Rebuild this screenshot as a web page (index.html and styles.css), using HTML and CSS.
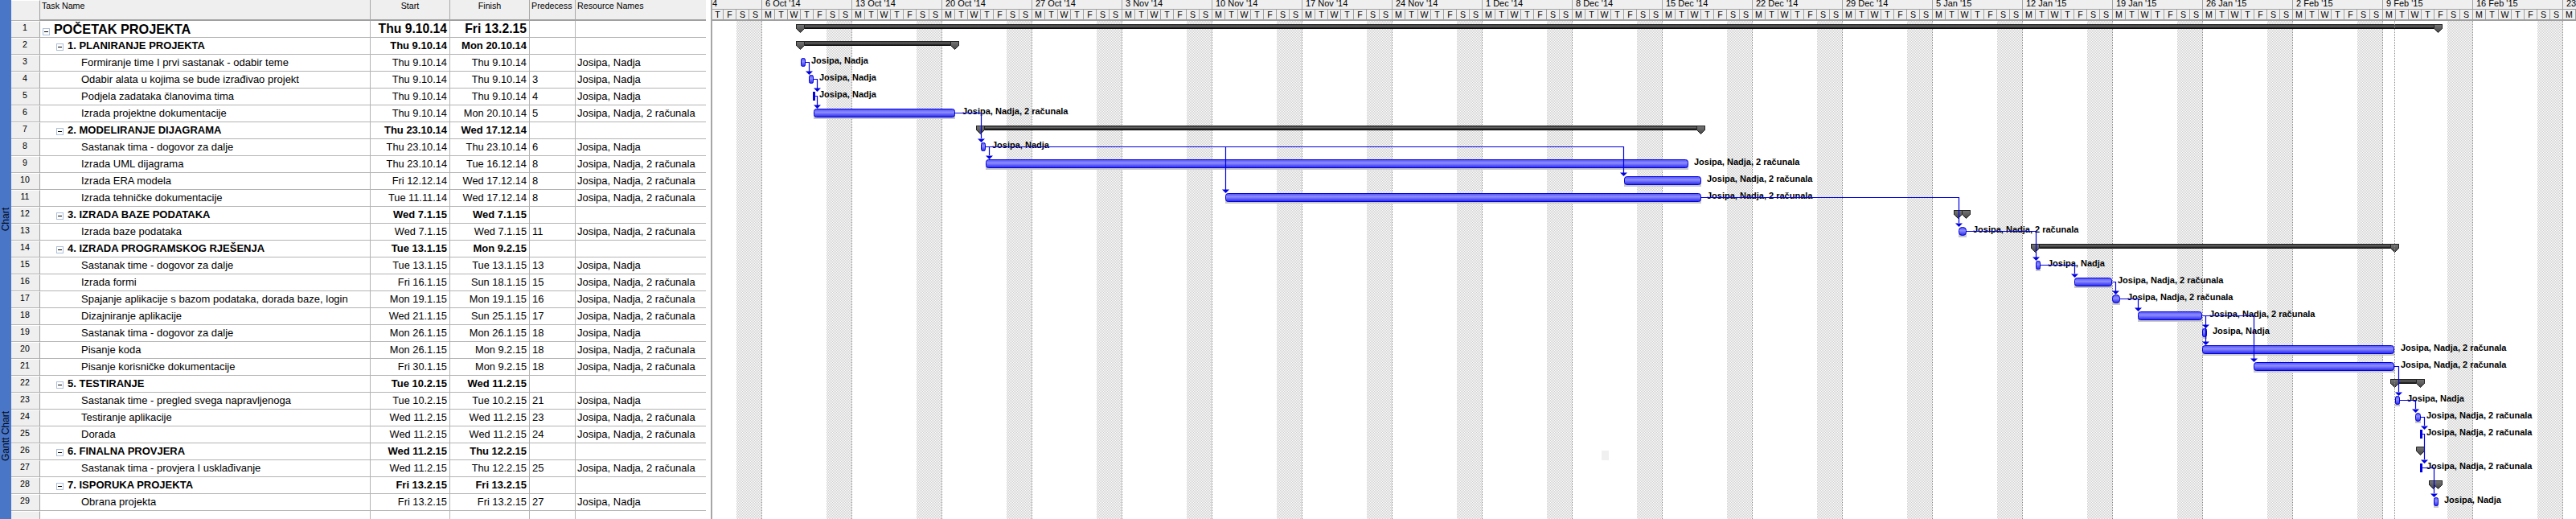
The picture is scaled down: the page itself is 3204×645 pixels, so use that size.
FILE: index.html
```html
<!DOCTYPE html>
<html lang="en">
<head>
    <meta charset="UTF-8">
    <title>Gantt Chart</title>
    <link rel="stylesheet" href="styles.css">
</head>
<body>
    <div class="view-bar">
        <span class="view-chart">Chart</span>
        <span class="view-gantt">Gantt Chart</span>
    </div>

    <div class="sheet">
        <table>
            <colgroup>
                <col class="c-num"><col class="c-name"><col class="c-date"><col class="c-date"><col class="c-pred"><col class="c-res">
            </colgroup>
            <thead>
                <tr>
                    <th class="num"></th>
                    <th class="left">Task Name</th>
                    <th>Start</th>
                    <th>Finish</th>
                    <th class="left">Predecess</th>
                    <th class="left">Resource Names</th>
                </tr>
            </thead>
            <tbody>
                <tr class="title"><td class="num">1</td><td class="name"><span class="toggle"></span>POČETAK PROJEKTA</td><td class="date">Thu 9.10.14</td><td class="date">Fri 13.2.15</td><td class="pred"></td><td class="res"></td></tr>
                <tr class="summary"><td class="num">2</td><td class="name"><span class="toggle"></span>1. PLANIRANJE PROJEKTA</td><td class="date">Thu 9.10.14</td><td class="date">Mon 20.10.14</td><td class="pred"></td><td class="res"></td></tr>
                <tr class="task"><td class="num">3</td><td class="name">Formiranje time I prvi sastanak - odabir teme</td><td class="date">Thu 9.10.14</td><td class="date">Thu 9.10.14</td><td class="pred"></td><td class="res">Josipa, Nadja</td></tr>
                <tr class="task"><td class="num">4</td><td class="name">Odabir alata u kojima se bude izrađivao projekt</td><td class="date">Thu 9.10.14</td><td class="date">Thu 9.10.14</td><td class="pred">3</td><td class="res">Josipa, Nadja</td></tr>
                <tr class="task"><td class="num">5</td><td class="name">Podjela zadataka članovima tima</td><td class="date">Thu 9.10.14</td><td class="date">Thu 9.10.14</td><td class="pred">4</td><td class="res">Josipa, Nadja</td></tr>
                <tr class="task"><td class="num">6</td><td class="name">Izrada projektne dokumentacije</td><td class="date">Thu 9.10.14</td><td class="date">Mon 20.10.14</td><td class="pred">5</td><td class="res">Josipa, Nadja, 2 računala</td></tr>
                <tr class="summary"><td class="num">7</td><td class="name"><span class="toggle"></span>2. MODELIRANJE DIJAGRAMA</td><td class="date">Thu 23.10.14</td><td class="date">Wed 17.12.14</td><td class="pred"></td><td class="res"></td></tr>
                <tr class="task"><td class="num">8</td><td class="name">Sastanak tima - dogovor za dalje</td><td class="date">Thu 23.10.14</td><td class="date">Thu 23.10.14</td><td class="pred">6</td><td class="res">Josipa, Nadja</td></tr>
                <tr class="task"><td class="num">9</td><td class="name">Izrada UML dijagrama</td><td class="date">Thu 23.10.14</td><td class="date">Tue 16.12.14</td><td class="pred">8</td><td class="res">Josipa, Nadja, 2 računala</td></tr>
                <tr class="task"><td class="num">10</td><td class="name">Izrada ERA modela</td><td class="date">Fri 12.12.14</td><td class="date">Wed 17.12.14</td><td class="pred">8</td><td class="res">Josipa, Nadja, 2 računala</td></tr>
                <tr class="task"><td class="num">11</td><td class="name">Izrada tehničke dokumentacije</td><td class="date">Tue 11.11.14</td><td class="date">Wed 17.12.14</td><td class="pred">8</td><td class="res">Josipa, Nadja, 2 računala</td></tr>
                <tr class="summary"><td class="num">12</td><td class="name"><span class="toggle"></span>3. IZRADA BAZE PODATAKA</td><td class="date">Wed 7.1.15</td><td class="date">Wed 7.1.15</td><td class="pred"></td><td class="res"></td></tr>
                <tr class="task"><td class="num">13</td><td class="name">Izrada baze podataka</td><td class="date">Wed 7.1.15</td><td class="date">Wed 7.1.15</td><td class="pred">11</td><td class="res">Josipa, Nadja, 2 računala</td></tr>
                <tr class="summary"><td class="num">14</td><td class="name"><span class="toggle"></span>4. IZRADA PROGRAMSKOG RJEŠENJA</td><td class="date">Tue 13.1.15</td><td class="date">Mon 9.2.15</td><td class="pred"></td><td class="res"></td></tr>
                <tr class="task"><td class="num">15</td><td class="name">Sastanak time - dogovor za dalje</td><td class="date">Tue 13.1.15</td><td class="date">Tue 13.1.15</td><td class="pred">13</td><td class="res">Josipa, Nadja</td></tr>
                <tr class="task"><td class="num">16</td><td class="name">Izrada formi</td><td class="date">Fri 16.1.15</td><td class="date">Sun 18.1.15</td><td class="pred">15</td><td class="res">Josipa, Nadja, 2 računala</td></tr>
                <tr class="task"><td class="num">17</td><td class="name">Spajanje aplikacije s bazom podataka, dorada baze, login</td><td class="date">Mon 19.1.15</td><td class="date">Mon 19.1.15</td><td class="pred">16</td><td class="res">Josipa, Nadja, 2 računala</td></tr>
                <tr class="task"><td class="num">18</td><td class="name">Dizajniranje aplikacije</td><td class="date">Wed 21.1.15</td><td class="date">Sun 25.1.15</td><td class="pred">17</td><td class="res">Josipa, Nadja, 2 računala</td></tr>
                <tr class="task"><td class="num">19</td><td class="name">Sastanak tima - dogovor za dalje</td><td class="date">Mon 26.1.15</td><td class="date">Mon 26.1.15</td><td class="pred">18</td><td class="res">Josipa, Nadja</td></tr>
                <tr class="task"><td class="num">20</td><td class="name">Pisanje koda</td><td class="date">Mon 26.1.15</td><td class="date">Mon 9.2.15</td><td class="pred">18</td><td class="res">Josipa, Nadja, 2 računala</td></tr>
                <tr class="task"><td class="num">21</td><td class="name">Pisanje korisničke dokumentacije</td><td class="date">Fri 30.1.15</td><td class="date">Mon 9.2.15</td><td class="pred">18</td><td class="res">Josipa, Nadja, 2 računala</td></tr>
                <tr class="summary"><td class="num">22</td><td class="name"><span class="toggle"></span>5. TESTIRANJE</td><td class="date">Tue 10.2.15</td><td class="date">Wed 11.2.15</td><td class="pred"></td><td class="res"></td></tr>
                <tr class="task"><td class="num">23</td><td class="name">Sastanak time - pregled svega napravljenoga</td><td class="date">Tue 10.2.15</td><td class="date">Tue 10.2.15</td><td class="pred">21</td><td class="res">Josipa, Nadja</td></tr>
                <tr class="task"><td class="num">24</td><td class="name">Testiranje aplikacije</td><td class="date">Wed 11.2.15</td><td class="date">Wed 11.2.15</td><td class="pred">23</td><td class="res">Josipa, Nadja, 2 računala</td></tr>
                <tr class="task"><td class="num">25</td><td class="name">Dorada</td><td class="date">Wed 11.2.15</td><td class="date">Wed 11.2.15</td><td class="pred">24</td><td class="res">Josipa, Nadja, 2 računala</td></tr>
                <tr class="summary"><td class="num">26</td><td class="name"><span class="toggle"></span>6. FINALNA PROVJERA</td><td class="date">Wed 11.2.15</td><td class="date">Thu 12.2.15</td><td class="pred"></td><td class="res"></td></tr>
                <tr class="task"><td class="num">27</td><td class="name">Sastanak tima - provjera I usklađivanje</td><td class="date">Wed 11.2.15</td><td class="date">Thu 12.2.15</td><td class="pred">25</td><td class="res">Josipa, Nadja, 2 računala</td></tr>
                <tr class="summary"><td class="num">28</td><td class="name"><span class="toggle"></span>7. ISPORUKA PROJEKTA</td><td class="date">Fri 13.2.15</td><td class="date">Fri 13.2.15</td><td class="pred"></td><td class="res"></td></tr>
                <tr class="task"><td class="num">29</td><td class="name">Obrana projekta</td><td class="date">Fri 13.2.15</td><td class="date">Fri 13.2.15</td><td class="pred">27</td><td class="res">Josipa, Nadja</td></tr>
                <tr class="task"><td class="num"></td><td class="name"></td><td class="date"></td><td class="date"></td><td class="pred"></td><td class="res"></td></tr>
            </tbody>
        </table>
    </div>

    <div class="chart">
        <div class="timeline">
            <div class="week week-first"><div class="week-label">4</div><div class="days"><span>T</span><span>F</span><span>S</span><span>S</span></div><div class="weekend"></div></div>
            <div class="week"><div class="week-label">6 Oct '14</div><div class="days"><span>M</span><span>T</span><span>W</span><span>T</span><span>F</span><span>S</span><span>S</span></div><div class="weekend"></div></div>
            <div class="week"><div class="week-label">13 Oct '14</div><div class="days"><span>M</span><span>T</span><span>W</span><span>T</span><span>F</span><span>S</span><span>S</span></div><div class="weekend"></div></div>
            <div class="week"><div class="week-label">20 Oct '14</div><div class="days"><span>M</span><span>T</span><span>W</span><span>T</span><span>F</span><span>S</span><span>S</span></div><div class="weekend"></div></div>
            <div class="week"><div class="week-label">27 Oct '14</div><div class="days"><span>M</span><span>T</span><span>W</span><span>T</span><span>F</span><span>S</span><span>S</span></div><div class="weekend"></div></div>
            <div class="week"><div class="week-label">3 Nov '14</div><div class="days"><span>M</span><span>T</span><span>W</span><span>T</span><span>F</span><span>S</span><span>S</span></div><div class="weekend"></div></div>
            <div class="week"><div class="week-label">10 Nov '14</div><div class="days"><span>M</span><span>T</span><span>W</span><span>T</span><span>F</span><span>S</span><span>S</span></div><div class="weekend"></div></div>
            <div class="week"><div class="week-label">17 Nov '14</div><div class="days"><span>M</span><span>T</span><span>W</span><span>T</span><span>F</span><span>S</span><span>S</span></div><div class="weekend"></div></div>
            <div class="week"><div class="week-label">24 Nov '14</div><div class="days"><span>M</span><span>T</span><span>W</span><span>T</span><span>F</span><span>S</span><span>S</span></div><div class="weekend"></div></div>
            <div class="week"><div class="week-label">1 Dec '14</div><div class="days"><span>M</span><span>T</span><span>W</span><span>T</span><span>F</span><span>S</span><span>S</span></div><div class="weekend"></div></div>
            <div class="week"><div class="week-label">8 Dec '14</div><div class="days"><span>M</span><span>T</span><span>W</span><span>T</span><span>F</span><span>S</span><span>S</span></div><div class="weekend"></div></div>
            <div class="week"><div class="week-label">15 Dec '14</div><div class="days"><span>M</span><span>T</span><span>W</span><span>T</span><span>F</span><span>S</span><span>S</span></div><div class="weekend"></div></div>
            <div class="week"><div class="week-label">22 Dec '14</div><div class="days"><span>M</span><span>T</span><span>W</span><span>T</span><span>F</span><span>S</span><span>S</span></div><div class="weekend"></div></div>
            <div class="week"><div class="week-label">29 Dec '14</div><div class="days"><span>M</span><span>T</span><span>W</span><span>T</span><span>F</span><span>S</span><span>S</span></div><div class="weekend"></div></div>
            <div class="week"><div class="week-label">5 Jan '15</div><div class="days"><span>M</span><span>T</span><span>W</span><span>T</span><span>F</span><span>S</span><span>S</span></div><div class="weekend"></div></div>
            <div class="week"><div class="week-label">12 Jan '15</div><div class="days"><span>M</span><span>T</span><span>W</span><span>T</span><span>F</span><span>S</span><span>S</span></div><div class="weekend"></div></div>
            <div class="week"><div class="week-label">19 Jan '15</div><div class="days"><span>M</span><span>T</span><span>W</span><span>T</span><span>F</span><span>S</span><span>S</span></div><div class="weekend"></div></div>
            <div class="week"><div class="week-label">26 Jan '15</div><div class="days"><span>M</span><span>T</span><span>W</span><span>T</span><span>F</span><span>S</span><span>S</span></div><div class="weekend"></div></div>
            <div class="week"><div class="week-label">2 Feb '15</div><div class="days"><span>M</span><span>T</span><span>W</span><span>T</span><span>F</span><span>S</span><span>S</span></div><div class="weekend"></div></div>
            <div class="week"><div class="week-label">9 Feb '15</div><div class="days"><span>M</span><span>T</span><span>W</span><span>T</span><span>F</span><span>S</span><span>S</span></div><div class="weekend"></div></div>
            <div class="week"><div class="week-label">16 Feb '15</div><div class="days"><span>M</span><span>T</span><span>W</span><span>T</span><span>F</span><span>S</span><span>S</span></div><div class="weekend"></div></div>
            <div class="week week-last"><div class="week-label">23</div><div class="days"><span>M</span></div></div>
        </div>

        <!-- viewBox starts at the chart's left edge, so x values are page pixels -->
        <svg class="bars" viewBox="886 0 2318 645" width="2318" height="645">
            <defs>
                <linearGradient id="bar-fill" x1="0" y1="0" x2="0" y2="1">
                    <stop offset="0" stop-color="#5252f6"/>
                    <stop offset="0.4" stop-color="#8c8cff"/>
                    <stop offset="0.6" stop-color="#6c6cfa"/>
                    <stop offset="1" stop-color="#2626e8"/>
                </linearGradient>
                <linearGradient id="sum-fill" x1="0" y1="0" x2="0" y2="1">
                    <stop offset="0" stop-color="#111"/>
                    <stop offset="0.4" stop-color="#666"/>
                    <stop offset="0.65" stop-color="#333"/>
                    <stop offset="1" stop-color="#000"/>
                </linearGradient>
                <linearGradient id="cap-fill" x1="0" y1="0" x2="0" y2="1">
                    <stop offset="0" stop-color="#777"/>
                    <stop offset="1" stop-color="#444"/>
                </linearGradient>
                <path id="cap" d="M.5 .5H10.5V5.5L5.5 10.5L.5 5.5Z"/>
                <path id="head" d="M-4.5 -4.5H4.5L0 0Z"/>
            </defs>

            <rect class="ghost" x="1992" y="560" width="9" height="12"/>

            <!-- summary bars -->
            <rect class="sum" x="990" y="30" width="2048" height="6"/>
            <use class="cap" href="#cap" x="990" y="30"/><use class="cap" href="#cap" x="3027" y="30"/>
            <rect class="sum" x="990" y="51" width="203" height="6"/>
            <use class="cap" href="#cap" x="990" y="51"/><use class="cap" href="#cap" x="1182" y="51"/>
            <rect class="sum" x="1214" y="156" width="907" height="6"/>
            <use class="cap" href="#cap" x="1214" y="156"/><use class="cap" href="#cap" x="2110" y="156"/>
            <rect class="sum" x="2430" y="261" width="21" height="6"/>
            <use class="cap" href="#cap" x="2430" y="261"/><use class="cap" href="#cap" x="2440" y="261"/>
            <rect class="sum" x="2526" y="303" width="458" height="6"/>
            <use class="cap" href="#cap" x="2526" y="303"/><use class="cap" href="#cap" x="2973" y="303"/>
            <rect class="sum" x="2973" y="471" width="43" height="6"/>
            <use class="cap" href="#cap" x="2973" y="471"/><use class="cap" href="#cap" x="3005" y="471"/>
            <use class="cap" href="#cap" x="3005" y="555"/>
            <rect class="sum" x="3021" y="597" width="17" height="6"/>
            <use class="cap" href="#cap" x="3021" y="597"/><use class="cap" href="#cap" x="3027" y="597"/>

            <!-- bar shadows -->
            <g class="shadow">
                <rect x="1012" y="138" width="176" height="10"/>
                <rect x="1226" y="201" width="874" height="10"/>
                <rect x="2020" y="222" width="96" height="10"/>
                <rect x="1524" y="243" width="592" height="10"/>
                <rect x="2436" y="285" width="10" height="10"/>
                <rect x="2532" y="327" width="6" height="10"/>
                <rect x="2580" y="348" width="47" height="10"/>
                <rect x="2627" y="369" width="10" height="10"/>
                <rect x="2659" y="390" width="80" height="10"/>
                <rect x="2739" y="411" width="6" height="10"/>
                <rect x="2739" y="432" width="239" height="10"/>
                <rect x="2803" y="453" width="175" height="10"/>
                <rect x="2979" y="495" width="6" height="10"/>
                <rect x="3004" y="516" width="7" height="10"/>
                <rect x="3027" y="621" width="6" height="10"/>
            </g>

            <!-- resource labels -->
            <text class="who" x="1009" y="79">Josipa, Nadja</text>
            <text class="who" x="1019" y="100">Josipa, Nadja</text>
            <text class="who" x="1019" y="121">Josipa, Nadja</text>
            <text class="who" x="1197" y="142">Josipa, Nadja, 2 računala</text>
            <text class="who" x="1234" y="184">Josipa, Nadja</text>
            <text class="who" x="2107" y="205">Josipa, Nadja, 2 računala</text>
            <text class="who" x="2123" y="226">Josipa, Nadja, 2 računala</text>
            <text class="who" x="2123" y="247">Josipa, Nadja, 2 računala</text>
            <text class="who" x="2454" y="289">Josipa, Nadja, 2 računala</text>
            <text class="who" x="2547" y="331">Josipa, Nadja</text>
            <text class="who" x="2634" y="352">Josipa, Nadja, 2 računala</text>
            <text class="who" x="2646" y="373">Josipa, Nadja, 2 računala</text>
            <text class="who" x="2748" y="394">Josipa, Nadja, 2 računala</text>
            <text class="who" x="2752" y="415">Josipa, Nadja</text>
            <text class="who" x="2986" y="436">Josipa, Nadja, 2 računala</text>
            <text class="who" x="2986" y="457">Josipa, Nadja, 2 računala</text>
            <text class="who" x="2994" y="499">Josipa, Nadja</text>
            <text class="who" x="3018" y="520">Josipa, Nadja, 2 računala</text>
            <text class="who" x="3018" y="541">Josipa, Nadja, 2 računala</text>
            <text class="who" x="3018" y="583">Josipa, Nadja, 2 računala</text>
            <text class="who" x="3040" y="625">Josipa, Nadja</text>

            <!-- task bars -->
            <rect class="bar" x="996.5" y="72.5" width="5" height="10" rx="2"/>
            <rect class="bar" x="1006.5" y="93.5" width="5" height="10" rx="2"/>
            <rect class="point" x="1011" y="114" width="3" height="11"/>
            <rect class="bar" x="1012.5" y="135.5" width="175" height="10" rx="3"/>
            <rect class="bar" x="1220.5" y="177.5" width="5" height="10" rx="2"/>
            <rect class="bar" x="1226.5" y="198.5" width="873" height="10" rx="3"/>
            <rect class="bar" x="2020.5" y="219.5" width="95" height="10" rx="3"/>
            <rect class="bar" x="1524.5" y="240.5" width="591" height="10" rx="3"/>
            <rect class="bar" x="2436.5" y="282.5" width="9" height="10" rx="4"/>
            <rect class="bar" x="2532.5" y="324.5" width="5" height="10" rx="2"/>
            <rect class="bar" x="2580.5" y="345.5" width="46" height="10" rx="3"/>
            <rect class="bar" x="2627.5" y="366.5" width="9" height="10" rx="4"/>
            <rect class="bar" x="2659.5" y="387.5" width="79" height="10" rx="3"/>
            <rect class="bar" x="2739.5" y="408.5" width="5" height="10" rx="2"/>
            <rect class="bar" x="2739.5" y="429.5" width="238" height="10" rx="3"/>
            <rect class="bar" x="2803.5" y="450.5" width="174" height="10" rx="3"/>
            <rect class="bar" x="2979.5" y="492.5" width="5" height="10" rx="2"/>
            <rect class="bar" x="3004.5" y="513.5" width="6" height="10" rx="3"/>
            <rect class="point" x="3010" y="534" width="3" height="11"/>
            <rect class="point" x="3010" y="576" width="3" height="11"/>
            <rect class="bar" x="3027.5" y="618.5" width="5" height="10" rx="2"/>

            <!-- dependency links -->
            <g class="links">
                <path d="M1002 77.5H1006.5V89"/>
                <path d="M1012 98.5H1016.5V110"/>
                <path d="M1014 119.5H1016.5V131"/>
                <path d="M1188 140.5H1220.5V172"/>
                <path d="M1226 182.5H1230.5V193"/>
                <path d="M1226 182.5H2019.5V215"/>
                <path d="M1226 182.5H1524.5V236"/>
                <path d="M2116 245.5H2436.5V277"/>
                <path d="M2446 287.5H2532.5V320"/>
                <path d="M2538 329.5H2580.5V340"/>
                <path d="M2627 350.5H2631.5V362"/>
                <path d="M2637 371.5H2659.5V383"/>
                <path d="M2739 392.5H2743.5V425"/>
                <path d="M2739 392.5H2803.5V446"/>
                <path d="M2978 455.5H2983.5V487"/>
                <path d="M2985 497.5H3004.5V508"/>
                <path d="M3011 518.5H3015.5V529"/>
                <path d="M3013 539.5H3015.5V571"/>
                <path d="M3013 581.5H3027.5V613"/>
            </g>
            <g class="heads">
                <use href="#head" x="1006.5" y="93"/>
                <use href="#head" x="1016.5" y="114"/>
                <use href="#head" x="1016.5" y="135"/>
                <use href="#head" x="1220.5" y="177"/>
                <use href="#head" x="1230.5" y="198"/>
                <use href="#head" x="2019.5" y="219"/>
                <use href="#head" x="1524.5" y="240"/>
                <use href="#head" x="2436.5" y="282"/>
                <use href="#head" x="2532.5" y="324"/>
                <use href="#head" x="2580.5" y="345"/>
                <use href="#head" x="2631.5" y="366"/>
                <use href="#head" x="2659.5" y="387"/>
                <use href="#head" x="2743.5" y="408"/>
                <use href="#head" x="2743.5" y="429"/>
                <use href="#head" x="2803.5" y="450"/>
                <use href="#head" x="2983.5" y="492"/>
                <use href="#head" x="3004.5" y="513"/>
                <use href="#head" x="3015.5" y="534"/>
                <use href="#head" x="3015.5" y="576"/>
                <use href="#head" x="3027.5" y="618"/>
            </g>

            <line class="today" x1="2978.5" y1="26" x2="2978.5" y2="645"/>
        </svg>
    </div>
</body>
</html>
```

FILE: styles.css
```css
* {
    box-sizing: border-box;
}

body {
    font-family: "Liberation Sans", Arial, sans-serif;
    display: flex;
    width: 3204px;
    height: 645px;
    margin: 0;
    overflow: hidden;
    background-color: #fff;
    color: #000;
}

/* blue strip with the view name */
.view-bar {
    flex: none;
    display: flex;
    flex-direction: column;
    align-items: center;
    width: 14px;
    padding-top: 258px;
    background-color: #4a76c8;
    font-size: 12px;
    color: #000814;
}

.view-bar span {
    writing-mode: vertical-rl;
    transform: rotate(180deg);
    line-height: 14px;
}

.view-gantt {
    margin-top: 224px;
}

/* task sheet */
.sheet {
    flex: none;
    width: 864px;
    height: 645px;
    overflow: hidden;
}

table {
    table-layout: fixed;
    width: 864px;
    border-collapse: separate;
    border-spacing: 0;
}

.c-num { width: 36px; }
.c-name { width: 411px; }
.c-date { width: 99px; }
.c-pred { width: 57px; }
.c-res { width: 162px; }

th, td {
    overflow: hidden;
    white-space: nowrap;
    border-right: 1px solid #b4b4b4;
    border-bottom: 1px solid #b4b4b4;
    padding: 0;
}

th {
    height: 26px;
    padding-top: 1px;
    vertical-align: top;
    background-color: #efefef;
    border-right-color: #a8a8a8;
    border-bottom: 2px solid #a0a0a0;
    font-size: 10.7px;
    line-height: 12px;
    font-weight: normal;
}

th.left {
    text-align: left;
    padding-left: 2px;
}

td {
    height: 21px;
    font-size: 13px;
    line-height: 20px;
}

td:last-child, th:last-child {
    border-right: none;
}

.num {
    vertical-align: top;
    text-align: center;
    background-color: #efefef;
    border-right: 1px solid #a0a0a0;
    border-bottom: 1px solid #b4b4b4;
    border-top: 1px solid #fff;
    font-size: 10.6px;
    line-height: 13px;
    padding-top: 1px;
    padding-right: 1px;
}

.name {
    padding-left: 51px;
}

.date {
    text-align: right;
    padding-right: 3px;
    font-size: 12.8px;
}

.pred {
    padding-left: 3px;
}

.res {
    padding-left: 2px;
}

.summary td:not(.num) {
    font-weight: bold;
}

.summary .name {
    padding-left: 20px;
    font-size: 13px;
}

.summary .date {
    font-size: 13px;
}

.title td:not(.num) {
    font-weight: bold;
    font-size: 15.7px;
}

.title td.name {
    padding-left: 3px;
    font-size: 16.3px;
}

.toggle {
    display: inline-flex;
    align-items: center;
    justify-content: center;
    width: 9px;
    height: 9px;
    margin-right: 5px;
    vertical-align: 2px;
    border: 1px solid #aebfd8;
    background-color: #fff;
}

.toggle::before {
    content: "";
    width: 5px;
    height: 1px;
    background-color: #000;
}

/* timeline */
.chart {
    position: relative;
    flex: none;
    width: 2320px;
    height: 645px;
    margin-left: 6px;
    border-left: 2px solid #a6a6a6;
    overflow: hidden;
}

.timeline {
    display: flex;
    height: 100%;
}

.week {
    flex: none;
    display: flex;
    flex-direction: column;
    width: 112px;
}

/* the chart opens and closes on part of a week */
.week-first {
    width: 62px;
}

.week-first .week-label {
    padding-left: 0;
}

.week-first .days span:first-child {
    width: 14px;
}

.week-first .weekend {
    margin-left: 30px;
}

.week-last {
    width: 16px;
}

.week-last .week-label {
    border-right: none;
}

.week-label {
    height: 12px;
    padding-left: 4px;
    overflow: hidden;
    white-space: nowrap;
    background-color: #efefef;
    border-right: 1px solid #a0a0a0;
    border-bottom: 1px solid #a0a0a0;
    font-size: 11px;
    line-height: 9px;
}

.days {
    display: flex;
    height: 14px;
    background-color: #efefef;
    border-bottom: 2px solid #a0a0a0;
}

.days span {
    width: 16px;
    text-align: center;
    border-right: 1px solid #a0a0a0;
    font-size: 10.6px;
    line-height: 12px;
}

.weekend {
    flex: 1;
    width: 32px;
    margin-left: 80px;
    border-right: 1px dotted #808080;
    background-image: conic-gradient(#cdcdcd 25%, #fff 0 50%, #cdcdcd 0 75%, #fff 0);
    background-size: 2px 2px;
}

/* bars and links */
.bars {
    position: absolute;
    top: 0;
    left: 0;
}

.ghost {
    fill: #f0f0f0;
}

.sum {
    fill: url(#sum-fill);
}

.cap {
    fill: url(#cap-fill);
    stroke: #222;
    stroke-width: 1;
}

.shadow rect {
    fill: #c9c9c9;
}

.who {
    font-size: 11px;
    font-weight: bold;
    fill: #000;
}

.bar {
    fill: url(#bar-fill);
    stroke: #0000e0;
    stroke-width: 1;
}

.point {
    fill: #0000e0;
}

.links path {
    fill: none;
    stroke: #0000e0;
    stroke-width: 1.2;
}

.heads use {
    fill: #0000e0;
}

.today {
    stroke: #8a8a8a;
    stroke-width: 1;
    stroke-dasharray: 1 1;
}
```
